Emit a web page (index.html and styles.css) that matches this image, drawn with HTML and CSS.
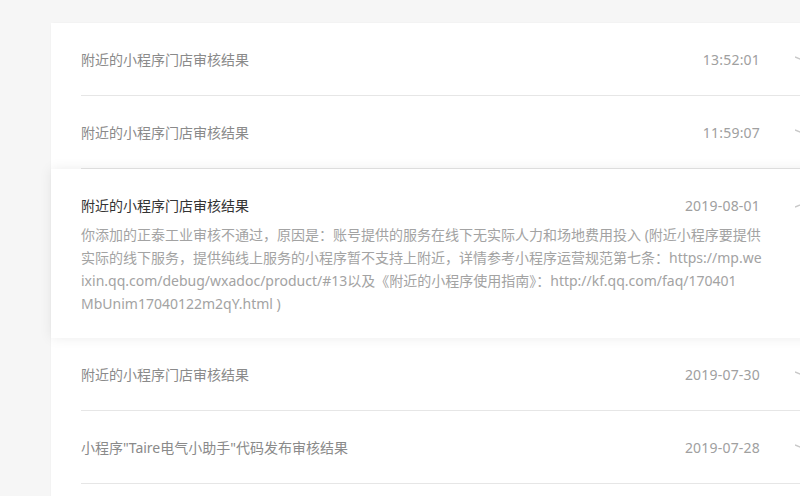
FILE: index.html
```html
<!DOCTYPE html>
<html lang="zh-CN">
<head>
    <meta charset="UTF-8">
    <meta name="viewport" content="width=device-width, initial-scale=1.0">
    <title>消息列表</title>
    <link rel="stylesheet" href="styles.css">
</head>
<body>

    <div class="msg-list">

        <div class="msg-item">
            <div class="msg-head">
                <span class="msg-title">附近的小程序门店审核结果</span>
                <span class="msg-time">13:52:01</span>
                <span class="msg-arrow"><svg width="20" height="8" viewBox="0 0 20 8"><polyline points="0,2 10,6 20,2" fill="none" stroke="#c8c8c8" stroke-width="1.4"/></svg></span>
            </div>
        </div>

        <div class="msg-item">
            <div class="msg-head">
                <span class="msg-title">附近的小程序门店审核结果</span>
                <span class="msg-time">11:59:07</span>
                <span class="msg-arrow"><svg width="20" height="8" viewBox="0 0 20 8"><polyline points="0,2 10,6 20,2" fill="none" stroke="#c8c8c8" stroke-width="1.4"/></svg></span>
            </div>
        </div>

        <div class="msg-item open">
            <div class="msg-head">
                <span class="msg-title">附近的小程序门店审核结果</span>
                <span class="msg-time">2019-08-01</span>
                <span class="msg-arrow"><svg width="20" height="8" viewBox="0 0 20 8"><polyline points="0,6 10,2 20,6" fill="none" stroke="#c8c8c8" stroke-width="1.4"/></svg></span>
            </div>
            <div class="msg-body">
                你添加的正泰工业审核不通过，原因是：账号提供的服务在线下无实际人力和场地费用投入 (附近小程序要提供<br>
                实际的线下服务，提供纯线上服务的小程序暂不支持上附近，详情参考小程序运营规范第七条：https://mp.we<br>
                ixin.qq.com/debug/wxadoc/product/#13以及《附近的小程序使用指南》：http://kf.qq.com/faq/170401<br>
                MbUnim17040122m2qY.html )
            </div>
        </div>

        <div class="msg-item">
            <div class="msg-head">
                <span class="msg-title">附近的小程序门店审核结果</span>
                <span class="msg-time">2019-07-30</span>
                <span class="msg-arrow"><svg width="20" height="8" viewBox="0 0 20 8"><polyline points="0,2 10,6 20,2" fill="none" stroke="#c8c8c8" stroke-width="1.4"/></svg></span>
            </div>
        </div>

        <div class="msg-item">
            <div class="msg-head">
                <span class="msg-title">小程序"Taire电气小助手"代码发布审核结果</span>
                <span class="msg-time">2019-07-28</span>
                <span class="msg-arrow"><svg width="20" height="8" viewBox="0 0 20 8"><polyline points="0,2 10,6 20,2" fill="none" stroke="#c8c8c8" stroke-width="1.4"/></svg></span>
            </div>
        </div>

    </div>

</body>
</html>
```

FILE: styles.css
```css
body {
    margin: 0;
    background-color: #f6f6f6;
    font-family: "Noto Sans", "Noto Sans CJK SC", sans-serif;
    font-size: 14px;
    overflow: hidden;
    height: 496px;
}

.msg-list {
    margin: 23px 0 0 51px;
    width: 820px;
    padding-bottom: 40px;
    background-color: #fff;
    border-radius: 4px;
    box-shadow: 0 0 2px rgba(0, 0, 0, 0.05);
}

.msg-item {
    background-color: #fff;
}

.msg-head {
    display: flex;
    align-items: center;
    height: 72px;
    margin-left: 30px;
    border-bottom: 1px solid #e6e6e6;
}

.msg-title {
    flex: 1;
    color: #8a8a8a;
}

.msg-time {
    color: #a0a0a0;
    text-align: right;
    letter-spacing: 0.2px;
}

.msg-arrow {
    display: flex;
    align-items: center;
    flex-shrink: 0;
    padding-left: 35px;
    width: 76px;
}

/* opened message, lifted with a shadow */
.msg-item.open {
    position: relative;
    z-index: 1;
    box-shadow: 0 0 12px rgba(0, 0, 0, 0.08);
    padding-bottom: 23px;
}

.msg-item.open .msg-head {
    height: auto;
    padding-top: 26px;
    border-bottom: none;
}

.msg-item.open .msg-title {
    color: #333;
}

.msg-body {
    margin: 8px 0 0 30px;
    width: 690px;
    color: #a3a3a3;
    line-height: 23px;
    white-space: nowrap;
}
```
